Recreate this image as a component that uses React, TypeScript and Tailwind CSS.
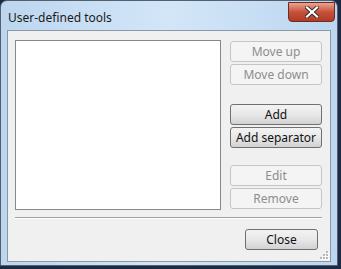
import React from "react";

const font = { fontFamily: '"Segoe UI", "Noto Sans", "Open Sans", sans-serif' };

function DlgButton({
  label,
  disabled,
  className = "",
}: {
  label: string;
  disabled?: boolean;
  className?: string;
}) {
  return (
    <button
      disabled={disabled}
      className={`h-[21px] rounded-[3px] border text-[12px] leading-none ${
        disabled
          ? "border-[#c3c6c9] bg-[#f4f4f4] text-[#8d8d8d]"
          : "border-[#707070] bg-gradient-to-b from-[#f3f3f3] via-[#e8e8e8] to-[#d2d2d2] text-[#111]"
      } ${className}`}
    >
      {label}
    </button>
  );
}

export default function App() {
  return (
    <div className="w-[341px] h-[269px] bg-[#1c2a44] overflow-hidden" style={font}>
      {/* window frame */}
      <div className="w-[338px] h-[266px] rounded-t-[7px] border border-[#55606c] bg-gradient-to-r from-[#bcd6ef] via-[#d3e6f8] to-[#bcd6ef] flex flex-col px-[6px] pb-[3px]">
        {/* title bar */}
        <div className="h-[29px] flex items-start justify-between">
          <span className="mt-[8px] ml-[1px] text-[12px] text-[#1a1a1a]">
            User-defined tools
          </span>
          <div className="mt-[1px] -mr-[4px] w-[47px] h-[20px] rounded-b-[4px] border border-[#6b2a22] bg-gradient-to-b from-[#e8a493] via-[#c7503a] to-[#b03a24] flex items-center justify-center">
            <svg width="14" height="12" viewBox="0 0 14 12">
              <path
                d="M2 1.5 L12 10.5 M12 1.5 L2 10.5"
                stroke="#3a2a2a"
                strokeWidth="4"
                strokeLinecap="square"
              />
              <path
                d="M2 1.5 L12 10.5 M12 1.5 L2 10.5"
                stroke="#ffffff"
                strokeWidth="2.2"
                strokeLinecap="square"
              />
            </svg>
          </div>
        </div>
        {/* client area */}
        <div className="relative flex-1 border border-[#8a98a8] bg-[#f0f0f0] flex flex-col px-[7px] pt-[9px]">
          <div className="flex gap-[9px]">
            <div className="w-[206px] h-[170px] bg-white border border-[#828790]" />
            <div className="w-[92px] flex flex-col pt-[1px]">
              <DlgButton label="Move up" disabled />
              <DlgButton label="Move down" disabled className="mt-[2px]" />
              <DlgButton label="Add" className="mt-[19px]" />
              <DlgButton label="Add separator" className="mt-[2px]" />
              <DlgButton label="Edit" disabled className="mt-[17px]" />
              <DlgButton label="Remove" disabled className="mt-[2px]" />
            </div>
          </div>
          <div className="mt-[7px] w-[307px] border-t border-[#a0a0a0] border-b border-b-white" />
          <div className="w-[307px] flex justify-end mt-[10px] pr-[4px]">
            <DlgButton label="Close" className="w-[73px]" />
          </div>
          {/* size grip */}
          <svg className="absolute right-[1px] bottom-[1px]" width="10" height="10" viewBox="0 0 10 10">
            {[
              [7, 1],
              [4, 4],
              [7, 4],
              [1, 7],
              [4, 7],
              [7, 7],
            ].map(([x, y]) => (
              <g key={`${x}-${y}`}>
                <rect x={x + 1} y={y + 1} width="2" height="2" fill="#ffffff" />
                <rect x={x} y={y} width="2" height="2" fill="#b8b8b8" />
              </g>
            ))}
          </svg>
        </div>
      </div>
    </div>
  );
}
